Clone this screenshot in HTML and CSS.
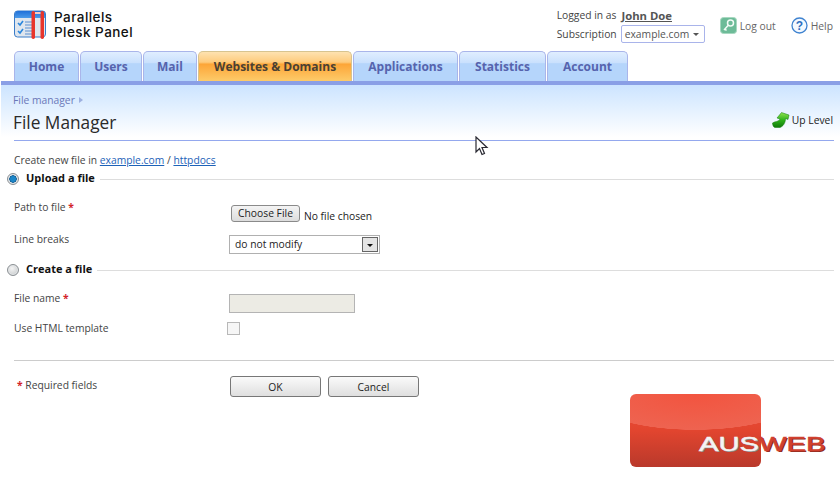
FILE: index.html
```html
<!DOCTYPE html>
<html lang="en">
<head>
<meta charset="utf-8">
<title>File Manager</title>
<link rel="stylesheet" href="styles.css">
</head>
<body>
<header class="top">
  <div class="brand">
    <svg class="logo" width="34" height="31" viewBox="0 0 34 31">
      <defs><linearGradient id="lg" x1="0" y1="0" x2="0" y2="1"><stop offset="0" stop-color="#1f6fd8"/><stop offset="1" stop-color="#4b9bea"/></linearGradient></defs>
      <rect x="0.5" y="1" width="31" height="26" rx="3" fill="#dfe6ee" stroke="#3a7cc8"/>
      <path d="M1 4a3 3 0 0 1 3-3h24a3 3 0 0 1 3 3v4H1z" fill="url(#lg)"/>
      <path d="M4 13l2 2 3-4M4 21l2 2 3-4" fill="none" stroke="#2a86dd" stroke-width="1.6"/>
      <path d="M11 12h7M11 15h7M11 18h7M11 21h7M11 24h7" stroke="#5a8fd0" stroke-width="1"/>
      <rect x="17.500" y="1" width="3.500" height="28" rx="1.700" fill="#e8352c"/>
      <rect x="26.500" y="1" width="3.500" height="28" rx="1.700" fill="#e8352c"/>
      <rect x="21" y="2" width="5.500" height="2" fill="#f6c9c0"/>
    </svg>
    <div class="brand-name">Parallels<br>Plesk Panel</div>
  </div>
  <div class="account">
    <div class="account-info">
      <div class="logged">Logged in as <a class="user" href="#">John Doe</a></div>
      <div class="subscription">Subscription <span class="sub-select">example.com<i class="sub-arrow"></i></span></div>
    </div>
    <a class="action action-logout" href="#">
      <svg width="17" height="17" viewBox="0 0 17 17"><rect x="0.5" y="0.5" width="16" height="16" rx="3" fill="#6dbb98" stroke="#a8d8c0"/><circle cx="10.500" cy="6" r="3" fill="none" stroke="#f2fbf6" stroke-width="1.500"/><path d="M8.500 8L4 13M5 12l1.500 1.500" stroke="#f2fbf6" stroke-width="1.500" fill="none"/></svg>
      Log out
    </a>
    <a class="action action-help" href="#">
      <svg width="17" height="17" viewBox="0 0 17 17"><circle cx="8.500" cy="8.500" r="7.500" fill="#f4f9ff" stroke="#3f83d0" stroke-width="1.300"/><text x="8.500" y="12.500" text-anchor="middle" class="help-mark">?</text></svg>
      Help
    </a>
  </div>
</header>

<nav class="tabs">
  <a class="tab tab-home" href="#">Home</a>
  <a class="tab tab-users" href="#">Users</a>
  <a class="tab tab-mail" href="#">Mail</a>
  <a class="tab tab-active" href="#">Websites &amp; Domains</a>
  <a class="tab tab-apps" href="#">Applications</a>
  <a class="tab tab-stats" href="#">Statistics</a>
  <a class="tab tab-account" href="#">Account</a>
</nav>

<section class="heading">
  <div class="crumbs">File manager <i class="crumb-arrow"></i></div>
  <div class="title-row">
    <h1>File Manager</h1>
    <a class="up" href="#">
      <svg width="18" height="16" viewBox="0 0 18 16"><defs><linearGradient id="ug" x1="0" y1="0" x2="0" y2="1"><stop offset="0" stop-color="#8fe24f"/><stop offset="0.500" stop-color="#2fb31a"/><stop offset="1" stop-color="#0f7a0a"/></linearGradient></defs><path d="M0.500 11C3 9 7 10 8 7L5 6 9.500 0.500 17 3l-1 4.500-2.500-1C13.500 11 11 14.500 8 15.500L3 15.500C1.500 15.500 0.500 13 0.500 11z" fill="url(#ug)" stroke="#0f7a0a" stroke-width="0.500"/></svg>
      Up Level
    </a>
  </div>
</section>

<main class="content">
  <p class="path">Create new file in <a href="#">example.com</a> / <a href="#">httpdocs</a></p>

  <div class="group-head group-upload">
    <span class="radio radio-on"></span><strong>Upload a file</strong><span class="rule"></span>
  </div>
  <div class="row row-path">
    <label>Path to file <em>*</em></label>
    <div class="file-field"><span class="choose">Choose File</span><span class="nofile">No file chosen</span></div>
  </div>
  <div class="row row-breaks">
    <label>Line breaks</label>
    <div class="select">do not modify<span class="select-btn"><i></i></span></div>
  </div>

  <div class="group-head group-create">
    <span class="radio"></span><strong>Create a file</strong><span class="rule"></span>
  </div>
  <div class="row row-name">
    <label>File name <em>*</em></label>
    <div class="input-disabled"></div>
  </div>
  <div class="row row-html">
    <label>Use HTML template</label>
    <span class="checkbox"></span>
  </div>

  <div class="footer-row">
    <div class="required"><em>*</em> Required fields</div>
    <div class="buttons">
      <button class="btn" type="button">OK</button>
      <button class="btn" type="button">Cancel</button>
    </div>
  </div>
</main>

<svg class="cursor" width="14" height="21" viewBox="0 0 14 21"><path d="M1 1v15l3.500-3.500 2.500 6 2.500-1-2.500-6H12z" fill="#fff" stroke="#2a2a33" stroke-width="1.200"/></svg>

<div class="watermark">
  <div class="wm-card"></div>
  <div class="wm-text"><span class="wm-aus">AUS</span><span class="wm-web">WEB</span></div>
</div>
</body>
</html>
```
FILE: styles.css
```css
* { box-sizing: border-box; }
html, body { margin: 0; padding: 0; }
body {
  width: 840px;
  height: 480px;
  overflow: hidden;
  position: relative;
  background: #fff;
  font-family: "Open Sans", "Noto Sans", sans-serif;
  font-size: 10.300px;
  color: #444;
}
a { color: inherit; text-decoration: none; }

.top {
  height: 51px;
  display: flex;
  justify-content: space-between;
  padding: 10px 7px 0 14px;
}
.brand { display: flex; gap: 6px; align-items: flex-start; }
.brand-name {
  font-family: "Inter", "Liberation Sans", sans-serif;
  font-size: 13.500px;
  font-weight: 500;
  letter-spacing: 0.450px;
  line-height: 15px;
  color: #111;
}
.account { display: flex; align-items: flex-start; }
.account-info { display: flex; flex-direction: column; align-items: flex-end; margin-top: -4px; }
.logged { height: 18px; display: flex; align-items: center; width: 148px; }
.user { font-weight: 700; color: #555; text-decoration: underline; margin-left: 5px; font-size: 11.300px; }
.subscription { display: flex; align-items: center; gap: 4px; margin-top: 1px; }
.sub-select {
  width: 84px;
  height: 18px;
  border: 1px solid #a9b4ea;
  border-radius: 2px;
  display: flex;
  align-items: center;
  justify-content: space-between;
  padding: 0 5px 0 3px;
  color: #555;
}
.sub-arrow { border: 3px solid transparent; border-top: 3px solid #555; border-bottom: 0; }
.action { display: flex; align-items: center; gap: 3px; height: 17px; margin-top: 7px; color: #666; }
.action-logout { margin-left: 15px; }
.action-help { margin-left: 15px; }
.help-mark { font: 700 12px "Liberation Sans", sans-serif; fill: #2f6fc0; }

.tabs { display: flex; height: 30px; padding-left: 14px; align-items: flex-end; }
.tab {
  height: 30px;
  border: 1px solid #a9b5ea;
  border-bottom: 0;
  border-radius: 5px 5px 0 0;
  background: linear-gradient(#e0eeff 0, #c9e0fd 38%, #b5d5fb 40%, #b5d5fb 100%);
  color: #5663ad;
  font-weight: 700;
  font-size: 12px;
  display: flex;
  align-items: center;
  justify-content: center;
}
.tab-home { width: 65px; margin-right: 1px; }
.tab-users { width: 62px; margin-right: 1px; }
.tab-mail { width: 54px; margin-right: 1px; }
.tab-active {
  width: 154px;
  margin-right: 1px;
  background: linear-gradient(#fee2b0 0, #fecb7c 35%, #fda537 42%, #fdcb6a 100%);
  color: #4a4033;
  border-color: #d8c48f;
}
.tab-apps { width: 105px; margin-right: 1px; }
.tab-stats { width: 87px; margin-right: 1px; }
.tab-account { width: 81px; }

.heading {
  height: 60px;
  margin-left: 1px;
  padding: 7px 6px 0 12px;
  border-top: 4px solid #8a9fe6;
  background: linear-gradient(#cce4ff 0, #fff 52px);
}
.crumbs { color: #6a78b8; height: 15px; display: flex; align-items: center; gap: 3px; }
.crumb-arrow { border: 3px solid transparent; border-left: 4px solid #9db0e0; border-right: 0; margin-left: 1px; }
.title-row {
  display: flex;
  justify-content: space-between;
  align-items: center;
  height: 34px;
  margin-left: 1px;
  padding-right: 1px;
  border-bottom: 1px solid #94a8ee;
}
h1 { margin: 0 0 3px; font-size: 17.300px; font-weight: 400; color: #2a2a2a; margin-left: -1px; }
.up { display: flex; align-items: center; gap: 2px; color: #222; margin-top: -7px; }

.content { padding: 0 6px 0 14px; }
.path { margin: 0; height: 31px; padding-top: 12px; line-height: 15px; }
.path a { color: #1d62b8; text-decoration: underline; }

.group-head { display: flex; align-items: center; height: 14px; margin-left: -7px; }
.group-head strong { color: #111; font-size: 11px; line-height: 14px; margin: -2px 0 0 7px; }
.rule { flex: 1; height: 1px; background: #ddd; margin-left: 5px; }
.radio {
  width: 12px;
  height: 12px;
  border-radius: 50%;
  border: 1px solid #8a8f93;
  background: radial-gradient(circle at 40% 35%, #f4f4f4, #c0c4c6);
  box-shadow: 0 0 0 1px #e4e6e8 inset;
}
.radio-on { background: radial-gradient(circle, #1c86c8 0 2.500px, #0e5a90 3.500px, #e4e8ec 4px); }

.row { display: flex; align-items: flex-start; line-height: 15px; }
.row label { width: 215px; }
.row em, .required em { color: #d2232a; font-style: normal; font-weight: 700; }
.row-path { margin-top: 14px; height: 32px; }
.file-field { display: flex; align-items: flex-end; margin-left: 2px; height: 25px; }
.choose {
  width: 69px;
  height: 17px;
  border: 1px solid #8a8a8a;
  border-radius: 3px;
  background: linear-gradient(#f4f4f4, #dcdcdc);
  color: #222;
  display: flex;
  align-items: center;
  justify-content: center;
  margin-bottom: 3px;
}
.nofile { color: #222; margin: 0 0 1px 4px; }
.row-breaks { height: 31px; }
.select {
  width: 151px;
  height: 19px;
  margin-top: 3px;
  border: 1px solid #b0b0b0;
  background: #fff;
  color: #222;
  padding-left: 5px;
  display: flex;
  align-items: center;
  justify-content: space-between;
}
.select-btn {
  width: 16px;
  height: 15px;
  margin-right: 1px;
  border: 1px solid #666;
  background: #e4e4e4;
  display: flex;
  align-items: center;
  justify-content: center;
}
.select-btn i { border: 3.500px solid transparent; border-top: 3.500px solid #111; border-bottom: 0; margin-top: 2px; }
.row-name { margin-top: 14px; height: 30px; }
.input-disabled { width: 126px; height: 19px; margin-top: 3px; border: 1px solid #b4b4b4; background: #ecebe4; }
.row-html { height: 39px; }
.checkbox { width: 13px; height: 13px; margin: 1px 0 0 -2px; border: 1px solid #b8b8b8; background: #f6f6f6; }

.footer-row {
  display: flex;
  border-top: 1px solid #ccc;
  height: 60px;
  padding-top: 15px;
}
.required { width: 216px; padding-left: 3px; line-height: 18px; }
.buttons { display: flex; gap: 7px; }
.btn {
  width: 91px;
  height: 21px;
  padding: 0;
  border: 1px solid #777;
  border-radius: 3px;
  background: linear-gradient(#fafafa, #dfdfdf);
  font: inherit;
  color: #222;
}

.cursor { position: absolute; left: 475px; top: 136px; }

.watermark { position: absolute; left: 630px; top: 394px; width: 210px; height: 74px; }
.wm-card {
  width: 131px;
  height: 73px;
  border-radius: 6px;
  background:
    radial-gradient(ellipse 110px 36px at 65px 0, #f2543f 0, #ee6350 99%, transparent 100%),
    linear-gradient(#ef4f3c, #e2452f 50%, #b9392b);
}
.wm-text {
  position: absolute;
  left: 69px;
  top: 38px;
  font: 400 21px/24px "Liberation Sans", sans-serif;
  -webkit-text-stroke: 0.500px currentColor;
  display: flex;
  transform: scaleX(1.390);
  transform-origin: left;
}
.wm-aus { color: #f4f4f4; text-shadow: 1px 1px 0 #8a8a8a; }
.wm-web { color: #d0402f; text-shadow: 1px 1px 0 #8a2a20; }
```
